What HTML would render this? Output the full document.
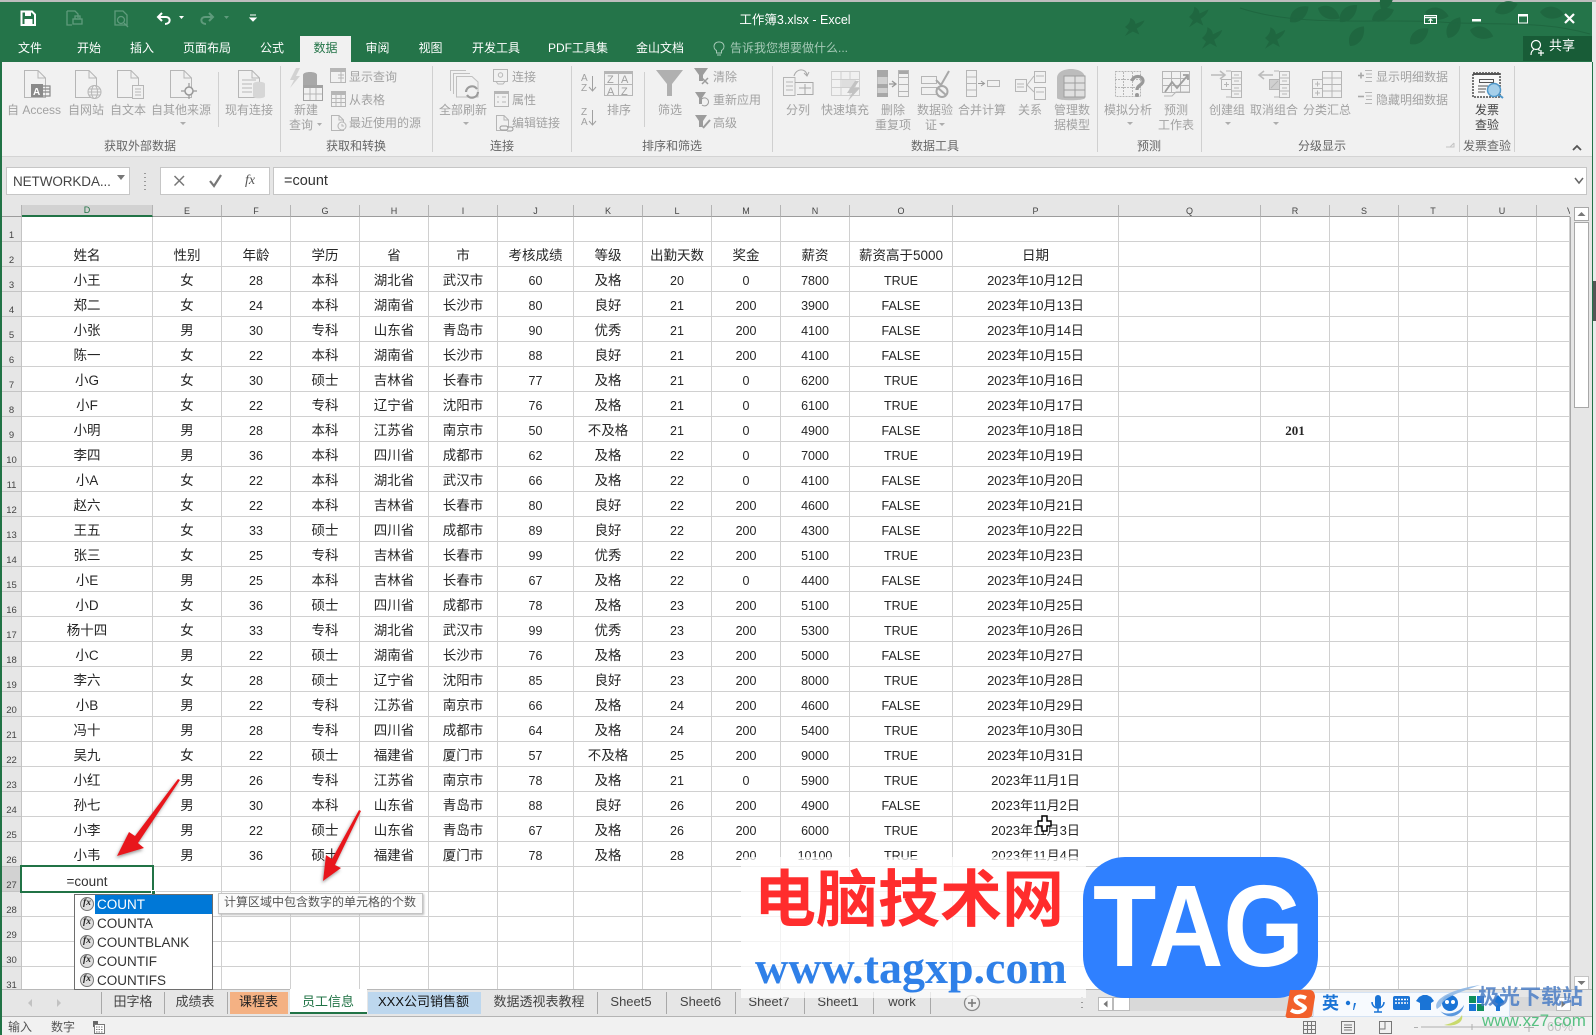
<!DOCTYPE html>
<html lang="zh-CN"><head><meta charset="utf-8"><title>工作簿3.xlsx - Excel</title>
<style>
html,body{margin:0;padding:0;width:1596px;height:1035px;overflow:hidden;background:#e6e6e6;font-family:"Liberation Sans","Noto Sans CJK SC",sans-serif}
*{box-sizing:border-box}
.a{position:absolute}
.t{position:absolute;white-space:nowrap;line-height:14px;font-size:12px;font-style:normal}
.c{transform:translateX(-50%)}
.r{color:#a2a2a2}
.g{color:#666}
.w{color:#fff}
#grid{position:absolute;left:2px;top:205px;width:1568px;height:784px;overflow:hidden}
table{border-collapse:separate;border-spacing:0;table-layout:fixed;width:1568px}
td{height:25px;padding:3px 0 0;border-right:1px solid #d0d0d0;border-bottom:1px solid #d0d0d0;text-align:center;font-size:13.5px;color:#262626;background:#fff;white-space:nowrap;overflow:hidden;line-height:14px}
tr>td:nth-child(4),tr>td:nth-child(8),tr>td:nth-child(10),tr>td:nth-child(11),tr>td:nth-child(12),tr>td:nth-child(13){font-size:12.5px}
tr>td:nth-child(14){font-size:13px}
tbody tr:nth-child(2)>td:nth-child(n){font-size:13.5px}
tbody th{height:25px;background:#e6e6e6;border-bottom:1px solid #c4c4c4;border-right:1px solid #c4c4c4;font-weight:normal;font-size:9.5px;color:#444;vertical-align:bottom;padding:0;line-height:11px}
thead th{height:12px;background:#e6e6e6;border-right:1px solid #b4b4b4;border-bottom:1px solid #9c9c9c;font-weight:normal;font-size:9px;color:#444;padding:0;line-height:10px;overflow:hidden}
.it{position:absolute;left:97px;font-size:13.5px;color:#333;line-height:19px;height:19px;white-space:nowrap}
.fx{position:absolute;left:80px;width:14px;height:14px;border-radius:50%;background:#dedede;border:1.5px solid #777;font:italic bold 9.5px "Liberation Serif",serif;color:#222;text-align:center;line-height:11px}
.tab{position:absolute;top:995px;font-size:13px;line-height:14px;color:#444;white-space:nowrap;transform:translateX(-50%)}
.sep{position:absolute;top:992px;width:1px;height:22px;background:#a8a8a8}
</style></head><body>

<!-- title bar -->
<div class="a" style="left:0;top:0;width:1596px;height:2px;background:#bdbdbd"></div>
<div class="a" style="left:0;top:2px;width:1592px;height:60px;background:#247449"></div>
<div class="a" style="left:1592px;top:2px;width:4px;height:1033px;background:#e9e9e9"></div>
<div class="a" style="left:1593px;top:281px;width:3px;height:40px;background:#555"></div>
<svg class="a" style="left:0;top:0" width="1596" height="62" viewBox="0 0 1596 62">
<defs><path id="lf" d="M0 0C5-9 16-10 24-2C17 6 6 7 0 0Z"/><path id="bd" d="M0 0C2-3 4-5 4-12C7-10 8-7 8-4L15-9C14-4 12-1 9 2L11 10L6 6L0 12L3 4Z"/></defs>
<g fill="#1f6740">
<use href="#bd" transform="translate(1125 27) scale(1.3 .75)"/><use href="#bd" transform="translate(1189 17) scale(1.3 .85)"/><use href="#bd" transform="translate(1202 38) scale(1.35 .9)"/><use href="#bd" transform="translate(1265 38) scale(1.35 .9)"/>
<use href="#lf" transform="translate(1290 22) rotate(-35)"/><use href="#lf" transform="translate(1318 8) rotate(30)"/><use href="#lf" transform="translate(1340 22) rotate(-40)"/>
<use href="#lf" transform="translate(1350 46) rotate(-50)"/><use href="#lf" transform="translate(1372 20) rotate(-20)"/><use href="#lf" transform="translate(1382 10) rotate(-60)"/>
<use href="#lf" transform="translate(1410 44) rotate(-35)"/><use href="#lf" transform="translate(1448 38) rotate(-55)"/><use href="#lf" transform="translate(1425 12) rotate(15)"/>
<use href="#lf" transform="translate(1470 30) rotate(20)"/><use href="#lf" transform="translate(1495 12) rotate(-15)"/><use href="#lf" transform="translate(1540 12) rotate(10)"/>
</g>
<path d="M1240 8C1300 28 1380 18 1440 22S1540 20 1590 34" fill="none" stroke="#1f6740"/>
<!-- QAT -->
<path d="M21.5 11.5H32L35 14.5V25H21.5Z" fill="none" stroke="#fff" stroke-width="2"/><rect x="25" y="12" width="6" height="4" fill="#fff"/><rect x="24.5" y="19" width="8" height="5.5" fill="#fff"/>
<g fill="none" stroke="#5f9b7c" stroke-width="1.3"><path d="M67 11H75L78 14V18M67 11V25H72"/><rect x="73" y="19" width="9" height="5"/><rect x="75" y="16" width="5" height="3"/><path d="M115 11H123L127 15V25H115Z"/><circle cx="121" cy="20" r="3.5"/><path d="M124 23L128 27"/></g>
<path d="M162 13L158 17L162 21M158 17H166C171 17 171 24 165 24" fill="none" stroke="#fff" stroke-width="2"/><path d="M179 16H184L181.5 19Z" fill="#fff"/>
<path d="M209 13L213 17L209 21M213 17H205C200 17 200 24 206 24" fill="none" stroke="#5f9b7c" stroke-width="2"/><path d="M224 16H229L226.5 19Z" fill="#5f9b7c"/>
<path d="M250 15H256M250 18H256L253 21Z" fill="#fff" stroke="#fff" stroke-width="1"/>
<!-- window -->
<g fill="none" stroke="#fff"><rect x="1424.5" y="15.5" width="12" height="8"/><path d="M1424 17.5H1437" stroke-width="1.5"/><path d="M1430.5 23V19M1428.5 21L1430.5 19L1432.5 21"/></g>
<rect x="1472" y="19" width="9" height="2.5" fill="#fff"/>
<rect x="1518.5" y="14.5" width="9" height="8.5" fill="none" stroke="#fff"/><rect x="1518" y="14" width="10" height="2.5" fill="#fff"/>
<path d="M1565 14L1574 23M1574 14L1565 23" stroke="#fff" stroke-width="2.2"/>
<rect x="1523" y="36" width="69" height="25" fill="#185c37"/>
<g fill="none" stroke="#fff" stroke-width="1.2"><circle cx="1536" cy="45" r="4.5"/><path d="M1531 55C1531 51 1533 50 1534 49.5M1538 49.5L1540 50.5M1538 53H1544M1541 50V56"/></g>
</svg>
<div class="t w c" style="left:795px;top:13px;font-size:12.5px">工作簿3.xlsx - Excel</div>
<div class="a" style="left:300px;top:36px;width:51px;height:26px;background:#f1f1f1"></div>
<div class="t w c" style="left:30px;top:41px">文件</div><div class="t w c" style="left:89px;top:41px">开始</div><div class="t w c" style="left:142px;top:41px">插入</div><div class="t w c" style="left:207px;top:41px">页面布局</div><div class="t w c" style="left:272px;top:41px">公式</div><div class="t c" style="left:325.5px;top:41px;color:#217346">数据</div><div class="t w c" style="left:377.5px;top:41px">审阅</div><div class="t w c" style="left:430.5px;top:41px">视图</div><div class="t w c" style="left:496px;top:41px">开发工具</div><div class="t w c" style="left:578px;top:41px">PDF工具集</div><div class="t w c" style="left:660px;top:41px">金山文档</div>
<div class="t" style="left:730px;top:41px;color:#a5c9b6">告诉我您想要做什么...</div>
<svg class="a" style="left:712px;top:41px" width="14" height="16"><path d="M7 1A4.5 4.5 0 0 0 4.5 9.5V12H9.5V9.5A4.5 4.5 0 0 0 7 1ZM5 14H9" fill="none" stroke="#a5c9b6"/></svg>
<div class="t w" style="left:1549px;top:39px;font-size:13px">共享</div>

<!-- ribbon -->
<div class="a" style="left:0;top:62px;width:1592px;height:94px;background:#f1f1f1"></div>
<div class="a" style="left:0;top:156px;width:1592px;height:1px;background:#d4d4d4"></div>
<svg class="a" style="left:0;top:60px" width="1596" height="100" viewBox="0 60 1596 100">
<defs><path id="d" d="M.5.5H14L21.5 8V27.5H.5ZM14 .5V8H21.5"/><path id="ds" d="M.5.5H8L12.5 5V15.5H.5ZM8 .5V5H12.5"/></defs>
<g stroke="#d0d0d0"><path d="M280.5 66V152M432.5 66V152M571.5 66V152M772.5 66V152M1097.5 66V152M1201.5 66V152M1459.5 66V152M1514.5 66V152"/><path d="M218.5 72V127M644.5 72V127"/></g>
<g fill="none" stroke="#b6b6b6">
<use href="#d" x="24" y="70"/><rect x="31" y="84" width="12" height="13" fill="#8a8a8a" stroke="none"/><path d="M43 86H50V96H43M43 89H50M43 92H50" stroke="#8a8a8a" stroke-width="1.2"/>
<use href="#d" x="75" y="70"/><circle cx="94.5" cy="92" r="6.5" fill="#f1f1f1"/><ellipse cx="94.5" cy="92" rx="3" ry="6.5"/><path d="M88 92H101M89 89H100M89 95H100"/>
<use href="#d" x="117" y="70"/><rect x="132.5" y="85.5" width="11" height="13" fill="#f1f1f1"/><path d="M135 89H141M135 92H141M135 95H141"/>
<use href="#d" x="170" y="70"/><circle cx="189" cy="91" r="4" fill="#f1f1f1" stroke="#999" stroke-width="1.5"/><path d="M181 91H185M193 91H197M189 83V87M189 95V99" stroke="#999" stroke-width="1.2"/>
<use href="#d" x="238" y="70"/><path d="M242 80H256M242 84H252M242 88H252M242 92H252"/><path d="M253 84C253 81 265 81 265 84V96C265 99 253 99 253 96Z" fill="#d6d6d6" stroke="none"/>
<path d="M296 68L290 80H294L290 88L300 76H296L300 68Z" fill="#d2d2d2" stroke="none"/><path d="M303 75C303 71 317 71 317 75V90H303Z" fill="#a8a8a8" stroke="none"/><rect x="303.5" y="85.5" width="19" height="15" fill="#f1f1f1" stroke="#a2a2a2"/><rect x="303" y="85" width="20" height="3" fill="#a2a2a2" stroke="none"/><path d="M310 88V100M316 88V100M304 94H322"/>
<rect x="330.5" y="68.5" width="15" height="14"/><rect x="331" y="69" width="14" height="3" fill="#b6b6b6" stroke="none"/><path d="M338 75H344M338 78H344M341 72V82"/>
<rect x="331.5" y="91.5" width="14" height="15"/><path d="M331 94.5H346M331 98.5H346M331 102.5H346M336 92V106M341 92V106"/><rect x="331" y="91" width="15" height="3" fill="#b6b6b6" stroke="none"/>
<use href="#ds" x="331" y="115"/><circle cx="342" cy="126" r="4" fill="#f1f1f1"/><path d="M342 124V126H344"/>
<g stroke="#c0c0c0"><path d="M450.5 91V70.5H466M453.5 94V73.5H470M456.5 97V76.5H472L478 82V97H456.5Z"/></g><path d="M466 92A6 6 0 0 1 477 89M478 92A6 6 0 0 1 467 95" stroke="#9c9c9c" stroke-width="2.2"/>
<rect x="493.5" y="69.5" width="14" height="12"/><circle cx="500.5" cy="75" r="2.2"/><path d="M496 81.5L498 84H503L505 81.5"/>
<rect x="494.5" y="91.5" width="14" height="15"/><rect x="494" y="91" width="15" height="3" fill="#b6b6b6" stroke="none"/><path d="M497 97H499M502 97H506M497 102H499M502 102H506"/>
<use href="#ds" x="496" y="115"/><path d="M502 126H506A2 2 0 0 1 506 130H502A2 2 0 0 1 502 126ZM507 127H511A2 2 0 0 1 511 131H507" fill="#f1f1f1" stroke="#999"/>
<path d="M592.5 76V91M589 87L592.5 91L596 87M592.5 110V125M589 121L592.5 125L596 121" stroke="#a0a0a0"/>
<rect x="604.5" y="71.5" width="28" height="24"/><rect x="604" y="71" width="29" height="3" fill="#b6b6b6" stroke="none"/><path d="M618.5 74V96M604 84.5H632"/>
<path d="M656 70H683L672 84V96H667V84Z" fill="#b0b0b0" stroke="none"/>
<path d="M694 68H708L703 75V81H699V75Z" fill="#9c9c9c" stroke="none"/><path d="M702 78L708 84M708 78L702 84" stroke="#9c9c9c" stroke-width="1.5"/>
<path d="M695 92H706L702 98V104H699V98Z" fill="#9c9c9c" stroke="none"/><path d="M702 105A4 4 0 1 0 701 100" stroke="#9c9c9c"/>
<path d="M695 115H707L703 121V127H699V121Z" fill="#9c9c9c" stroke="none"/><path d="M703 128L710 120" stroke="#9c9c9c" stroke-width="2"/>
<path d="M783.5 77.5H795V95.5H783.5ZM786 82H793M786 86H793M786 90H793"/><path d="M795 82.5H813V94.5H797M799 88H811M805 84V94M794 76C796 68 806 68 807 75M804 73L807 76L809 72" stroke="#a8a8a8"/>
<rect x="831.5" y="71.5" width="28" height="24" stroke="#cfcfcf"/><path d="M831 79.5H860M831 87.5H860M841 72V95M850 72V95" stroke="#cfcfcf"/><rect x="842" y="80" width="14" height="7" fill="#dedede" stroke="none"/><path d="M855 81L847 93H852L848 101L860 88H854L859 81Z" fill="#c2c2c2" stroke="none"/>
<rect x="877" y="70" width="11" height="27" fill="#a8a8a8" stroke="none"/><rect x="877.5" y="77" width="10" height="7" fill="#d0d0d0" stroke="none"/><rect x="877.5" y="88" width="10" height="5" fill="#d0d0d0" stroke="none"/><path d="M889 84H895M892 81L896 84L892 87" stroke="#999" stroke-width="1.3"/><rect x="898" y="70" width="10" height="4" fill="#a8a8a8" stroke="none"/><rect x="898.5" y="70.5" width="10" height="26"/><path d="M898 77.5H908M898 84.5H908M898 91.5H908"/>
<rect x="921.5" y="76.5" width="15" height="7"/><rect x="921.5" y="87.5" width="15" height="7"/><path d="M936 80L941 85L949 71" stroke="#a8a8a8" stroke-width="2"/><circle cx="942" cy="91.5" r="5.5" stroke="#a8a8a8" stroke-width="2"/><path d="M938 88L946 95" stroke="#a8a8a8" stroke-width="2"/>
<path d="M966.5 70.5H976.5V96.5H966.5ZM966 77H977M966 83.5H977M966 90H977"/><path d="M978 83.5H984M981 81L984.5 83.5L981 86" stroke="#999"/><rect x="987.5" y="80.5" width="12" height="6"/>
<rect x="1015.5" y="79.5" width="11" height="12"/><rect x="1034.5" y="71.5" width="11" height="11"/><rect x="1034.5" y="87.5" width="11" height="12"/><path d="M1017 84H1024M1017 87H1024M1027 85L1034 76M1027 85L1034 92M1036 76H1044M1036 92H1044"/>
<path d="M1057 78C1057 66 1085 66 1085 78V98C1085 101 1057 101 1057 98Z" fill="#bcbcbc" stroke="none"/><rect x="1064" y="76" width="21" height="21" fill="#e0e0e0" stroke="#9e9e9e"/><path d="M1075 76V97M1064 83H1085M1064 90H1085" stroke="#9e9e9e"/>
<rect x="1115.5" y="71.5" width="25" height="25" stroke-dasharray="2 1"/><path d="M1115 79.5H1141M1115 87.5H1141M1123.5 72V96M1132.5 72V96" stroke-dasharray="2 1"/><path d="M1132 81C1133 75 1143 75 1143 81C1143 85 1137 85 1137 90" stroke="#999" stroke-width="3.2"/><circle cx="1137" cy="95" r="2" fill="#999" stroke="none"/>
<rect x="1162.5" y="71.5" width="27" height="21"/><path d="M1162 78.5H1190M1162 85.5H1190M1171.5 72V92M1180.5 72V92"/><path d="M1165 92L1172 82L1177 88L1188 75M1183 75H1188V80" stroke="#9f9f9f" stroke-width="1.8"/><path d="M1164 96H1172L1176 92H1190"/>
<path d="M1211 75H1225M1220 71L1225 75L1220 79" stroke="#bbb" stroke-width="1.6"/><path d="M1231.5 71.5H1241.5V97.5H1231.5ZM1231 78H1242M1231 84.5H1242M1231 91H1242M1234 75H1239M1234 81H1239M1234 88H1239M1234 94H1239M1231 71H1226M1231 97H1226"/><rect x="1221.5" y="79.5" width="10" height="10" fill="#f1f1f1"/><path d="M1224 84.5H1229M1226.5 82V87"/>
<path d="M1273 75H1259M1264 71L1259 75L1264 79" stroke="#bbb" stroke-width="1.6"/><path d="M1279.5 71.5H1289.5V97.5H1279.5ZM1279 78H1290M1279 84.5H1290M1279 91H1290M1282 75H1287M1282 81H1287M1282 88H1287M1282 94H1287M1279 71H1274M1279 97H1274"/><rect x="1269.5" y="79.5" width="10" height="10" fill="#d0d0d0"/><path d="M1271 88L1278 81"/>
<path d="M1322.5 71.5H1341.5V97.5H1322.5ZM1322 78H1342M1322 84.5H1342M1322 91H1342M1332 72V97"/><rect x="1312.5" y="79.5" width="10" height="9" fill="#f1f1f1"/><path d="M1315 84H1320M1317.5 81.5V86.5"/><rect x="1312.5" y="88.5" width="10" height="9" fill="#f1f1f1"/><path d="M1315 93H1320M1317.5 90.5V95.5"/>
<path d="M1358 75.5H1364M1361 72.5V78.5" stroke="#a8a8a8" stroke-width="1.6"/><path d="M1365 70.5H1372M1366 74H1372M1366 77.5H1372M1365 81.5H1372"/>
<path d="M1358 96.5H1364" stroke="#a8a8a8" stroke-width="1.6"/><path d="M1365 92.5H1372M1366 96H1372M1366 99.5H1372M1365 103.5H1372"/>
<rect x="1473" y="73" width="27" height="24" stroke="#4a4a4a" stroke-width="1.5" stroke-dasharray="2 1" fill="#f8f8f8"/><rect x="1473" y="73" width="27" height="2" fill="#555" stroke="none"/><rect x="1479.5" y="79.5" width="14" height="3" stroke="#555"/><path d="M1478 86H1488M1478 89H1486M1478 92H1485" stroke="#555"/>
<circle cx="1494" cy="90" r="6.5" fill="#a5cfea" stroke="#4f97c9" stroke-width="1.5"/><path d="M1498.5 94.5L1503 98" stroke="#4f97c9" stroke-width="2"/>
<path d="M1446 147H1454V143M1450 147L1454 143" stroke="#c4c4c4"/>
<path d="M1573 150L1577 146L1581 150" stroke="#555" stroke-width="1.8"/>
</g>
<g fill="#adadad"><path d="M180 122H186L183 125ZM317 123H322L319.5 126ZM463 122H469L466 125ZM939 123H945L942 126ZM1127 122H1133L1130 125ZM1225 122H1231L1228 125ZM1273 122H1279L1276 125Z"/></g>
<g fill="#a0a0a0" font-size="10" font-family="Liberation Sans,sans-serif"><text x="581" y="81">A</text><text x="581" y="91">Z</text><text x="581" y="115">Z</text><text x="581" y="125">A</text><text x="607" y="83" font-size="11">Z</text><text x="621" y="83" font-size="11">A</text><text x="607" y="95" font-size="11">A</text><text x="621" y="95" font-size="11">Z</text></g>
<text x="33" y="95" fill="#fff" font-size="10" font-weight="bold" font-family="Liberation Sans,sans-serif">A</text>
</svg>
<div class="t r c" style="left:34px;top:103px">自 Access</div><div class="t r c" style="left:86px;top:103px">自网站</div><div class="t r c" style="left:128px;top:103px">自文本</div><div class="t r c" style="left:181px;top:103px">自其他来源</div><div class="t r c" style="left:249px;top:103px">现有连接</div>
<div class="t r c" style="left:306px;top:103px">新建</div><div class="t r c" style="left:301px;top:118px">查询</div>
<div class="t r" style="left:349px;top:70px">显示查询</div><div class="t r" style="left:349px;top:93px">从表格</div><div class="t r" style="left:349px;top:116px">最近使用的源</div>
<div class="t r c" style="left:463px;top:103px">全部刷新</div><div class="t r" style="left:512px;top:70px">连接</div><div class="t r" style="left:512px;top:93px">属性</div><div class="t r" style="left:512px;top:116px">编辑链接</div>
<div class="t r c" style="left:619px;top:103px">排序</div><div class="t r c" style="left:670px;top:103px">筛选</div><div class="t r" style="left:713px;top:70px">清除</div><div class="t r" style="left:713px;top:93px">重新应用</div><div class="t r" style="left:713px;top:116px">高级</div>
<div class="t r c" style="left:798px;top:103px">分列</div><div class="t r c" style="left:845px;top:103px">快速填充</div><div class="t r c" style="left:893px;top:103px">删除</div><div class="t r c" style="left:893px;top:118px">重复项</div><div class="t r c" style="left:935px;top:103px">数据验</div><div class="t r c" style="left:931px;top:118px">证</div><div class="t r c" style="left:982px;top:103px">合并计算</div><div class="t r c" style="left:1030px;top:103px">关系</div><div class="t r c" style="left:1072px;top:103px">管理数</div><div class="t r c" style="left:1072px;top:118px">据模型</div>
<div class="t r c" style="left:1128px;top:103px">模拟分析</div><div class="t r c" style="left:1176px;top:103px">预测</div><div class="t r c" style="left:1176px;top:118px">工作表</div>
<div class="t r c" style="left:1227px;top:103px">创建组</div><div class="t r c" style="left:1274px;top:103px">取消组合</div><div class="t r c" style="left:1327px;top:103px">分类汇总</div><div class="t r" style="left:1376px;top:70px">显示明细数据</div><div class="t r" style="left:1376px;top:93px">隐藏明细数据</div>
<div class="t c" style="left:1487px;top:103px;color:#444">发票</div><div class="t c" style="left:1487px;top:118px;color:#444">查验</div>
<div class="t g c" style="left:140px;top:139px">获取外部数据</div><div class="t g c" style="left:356px;top:139px">获取和转换</div><div class="t g c" style="left:502px;top:139px">连接</div><div class="t g c" style="left:672px;top:139px">排序和筛选</div><div class="t g c" style="left:935px;top:139px">数据工具</div><div class="t g c" style="left:1149px;top:139px">预测</div><div class="t g c" style="left:1322px;top:139px">分级显示</div><div class="t g c" style="left:1487px;top:139px">发票查验</div>

<!-- formula bar -->
<div class="a" style="left:6px;top:167px;width:124px;height:28px;background:#fff;border:1px solid #c6c6c6"></div>
<div class="t" style="left:13px;top:175px;font-size:13.5px;color:#444;letter-spacing:-.1px">NETWORKDA...</div>
<svg class="a" style="left:0;top:160px" width="300" height="40"><path d="M117 15H125L121 20Z" fill="#777"/><path d="M145 13V14M145 17V18M145 21V22M145 25V26M145 29V30" stroke="#999" stroke-width="2"/></svg>
<div class="a" style="left:160px;top:167px;width:110px;height:28px;background:#fff;border:1px solid #c6c6c6"></div>
<svg class="a" style="left:160px;top:167px" width="110" height="28"><path d="M14.5 9L24 18.5M24 9L14.5 18.5" stroke="#777" stroke-width="1.5"/><path d="M50 14L54 19L61 8" fill="none" stroke="#777" stroke-width="2.2"/></svg>
<div class="t" style="left:245px;top:174px;font:italic 14px 'Liberation Serif',serif;color:#555;line-height:14px">fx</div>
<div class="a" style="left:273px;top:167px;width:1314px;height:28px;background:#fff;border:1px solid #c6c6c6"></div>
<div class="t" style="left:284px;top:174px;font-size:14.5px;color:#333">=count</div>
<svg class="a" style="left:1572px;top:174px" width="14" height="14"><path d="M3 4L7 9L11 4" fill="none" stroke="#666" stroke-width="1.5"/></svg>

<!-- left green edge -->
<div class="a" style="left:0;top:62px;width:2px;height:973px;background:#217346;z-index:9"></div>
<div class="a" style="left:1592px;top:62px;width:1px;height:973px;background:#217346;z-index:9"></div>

<!-- grid -->
<div id="grid"><table>
<colgroup><col style="width:20px"><col style="width:131px"><col style="width:69px"><col style="width:69px"><col style="width:69px"><col style="width:69px"><col style="width:69px"><col style="width:76px"><col style="width:69px"><col style="width:69px"><col style="width:69px"><col style="width:69px"><col style="width:103px"><col style="width:166px"><col style="width:142px"><col style="width:69px"><col style="width:69px"><col style="width:69px"><col style="width:69px"><col style="width:33px"></colgroup>
<thead><tr><th></th><th style="background:#d2d2d2;color:#217346;border-bottom:2px solid #217346">D</th><th>E</th><th>F</th><th>G</th><th>H</th><th>I</th><th>J</th><th>K</th><th>L</th><th>M</th><th>N</th><th>O</th><th>P</th><th>Q</th><th>R</th><th>S</th><th>T</th><th>U</th><th style="text-align:right;border-right:0"><span style="position:relative;left:3px">V</span></th></tr></thead>
<tbody>
<tr><th>1</th><td></td><td></td><td></td><td></td><td></td><td></td><td></td><td></td><td></td><td></td><td></td><td></td><td></td><td></td><td></td><td></td><td></td><td></td><td></td></tr>
<tr><th>2</th><td>姓名</td><td>性别</td><td>年龄</td><td>学历</td><td>省</td><td>市</td><td>考核成绩</td><td>等级</td><td>出勤天数</td><td>奖金</td><td>薪资</td><td>薪资高于5000</td><td>日期</td><td></td><td></td><td></td><td></td><td></td><td></td></tr>
<tr><th>3</th><td>小王</td><td>女</td><td>28</td><td>本科</td><td>湖北省</td><td>武汉市</td><td>60</td><td>及格</td><td>20</td><td>0</td><td>7800</td><td>TRUE</td><td>2023年10月12日</td><td></td><td></td><td></td><td></td><td></td><td></td></tr>
<tr><th>4</th><td>郑二</td><td>女</td><td>24</td><td>本科</td><td>湖南省</td><td>长沙市</td><td>80</td><td>良好</td><td>21</td><td>200</td><td>3900</td><td>FALSE</td><td>2023年10月13日</td><td></td><td></td><td></td><td></td><td></td><td></td></tr>
<tr><th>5</th><td>小张</td><td>男</td><td>30</td><td>专科</td><td>山东省</td><td>青岛市</td><td>90</td><td>优秀</td><td>21</td><td>200</td><td>4100</td><td>FALSE</td><td>2023年10月14日</td><td></td><td></td><td></td><td></td><td></td><td></td></tr>
<tr><th>6</th><td>陈一</td><td>女</td><td>22</td><td>本科</td><td>湖南省</td><td>长沙市</td><td>88</td><td>良好</td><td>21</td><td>200</td><td>4100</td><td>FALSE</td><td>2023年10月15日</td><td></td><td></td><td></td><td></td><td></td><td></td></tr>
<tr><th>7</th><td>小G</td><td>女</td><td>30</td><td>硕士</td><td>吉林省</td><td>长春市</td><td>77</td><td>及格</td><td>21</td><td>0</td><td>6200</td><td>TRUE</td><td>2023年10月16日</td><td></td><td></td><td></td><td></td><td></td><td></td></tr>
<tr><th>8</th><td>小F</td><td>女</td><td>22</td><td>专科</td><td>辽宁省</td><td>沈阳市</td><td>76</td><td>及格</td><td>21</td><td>0</td><td>6100</td><td>TRUE</td><td>2023年10月17日</td><td></td><td></td><td></td><td></td><td></td><td></td></tr>
<tr><th>9</th><td>小明</td><td>男</td><td>28</td><td>本科</td><td>江苏省</td><td>南京市</td><td>50</td><td>不及格</td><td>21</td><td>0</td><td>4900</td><td>FALSE</td><td>2023年10月18日</td><td></td><td style="font:bold 13px 'Liberation Serif',serif">201</td><td></td><td></td><td></td><td></td></tr>
<tr><th>10</th><td>李四</td><td>男</td><td>36</td><td>本科</td><td>四川省</td><td>成都市</td><td>62</td><td>及格</td><td>22</td><td>0</td><td>7000</td><td>TRUE</td><td>2023年10月19日</td><td></td><td></td><td></td><td></td><td></td><td></td></tr>
<tr><th>11</th><td>小A</td><td>女</td><td>22</td><td>本科</td><td>湖北省</td><td>武汉市</td><td>66</td><td>及格</td><td>22</td><td>0</td><td>4100</td><td>FALSE</td><td>2023年10月20日</td><td></td><td></td><td></td><td></td><td></td><td></td></tr>
<tr><th>12</th><td>赵六</td><td>女</td><td>22</td><td>本科</td><td>吉林省</td><td>长春市</td><td>80</td><td>良好</td><td>22</td><td>200</td><td>4600</td><td>FALSE</td><td>2023年10月21日</td><td></td><td></td><td></td><td></td><td></td><td></td></tr>
<tr><th>13</th><td>王五</td><td>女</td><td>33</td><td>硕士</td><td>四川省</td><td>成都市</td><td>89</td><td>良好</td><td>22</td><td>200</td><td>4300</td><td>FALSE</td><td>2023年10月22日</td><td></td><td></td><td></td><td></td><td></td><td></td></tr>
<tr><th>14</th><td>张三</td><td>女</td><td>25</td><td>专科</td><td>吉林省</td><td>长春市</td><td>99</td><td>优秀</td><td>22</td><td>200</td><td>5100</td><td>TRUE</td><td>2023年10月23日</td><td></td><td></td><td></td><td></td><td></td><td></td></tr>
<tr><th>15</th><td>小E</td><td>男</td><td>25</td><td>本科</td><td>吉林省</td><td>长春市</td><td>67</td><td>及格</td><td>22</td><td>0</td><td>4400</td><td>FALSE</td><td>2023年10月24日</td><td></td><td></td><td></td><td></td><td></td><td></td></tr>
<tr><th>16</th><td>小D</td><td>女</td><td>36</td><td>硕士</td><td>四川省</td><td>成都市</td><td>78</td><td>及格</td><td>23</td><td>200</td><td>5100</td><td>TRUE</td><td>2023年10月25日</td><td></td><td></td><td></td><td></td><td></td><td></td></tr>
<tr><th>17</th><td>杨十四</td><td>女</td><td>33</td><td>专科</td><td>湖北省</td><td>武汉市</td><td>99</td><td>优秀</td><td>23</td><td>200</td><td>5300</td><td>TRUE</td><td>2023年10月26日</td><td></td><td></td><td></td><td></td><td></td><td></td></tr>
<tr><th>18</th><td>小C</td><td>男</td><td>22</td><td>硕士</td><td>湖南省</td><td>长沙市</td><td>76</td><td>及格</td><td>23</td><td>200</td><td>5000</td><td>FALSE</td><td>2023年10月27日</td><td></td><td></td><td></td><td></td><td></td><td></td></tr>
<tr><th>19</th><td>李六</td><td>女</td><td>28</td><td>硕士</td><td>辽宁省</td><td>沈阳市</td><td>85</td><td>良好</td><td>23</td><td>200</td><td>8000</td><td>TRUE</td><td>2023年10月28日</td><td></td><td></td><td></td><td></td><td></td><td></td></tr>
<tr><th>20</th><td>小B</td><td>男</td><td>22</td><td>专科</td><td>江苏省</td><td>南京市</td><td>66</td><td>及格</td><td>24</td><td>200</td><td>4600</td><td>FALSE</td><td>2023年10月29日</td><td></td><td></td><td></td><td></td><td></td><td></td></tr>
<tr><th>21</th><td>冯十</td><td>男</td><td>28</td><td>专科</td><td>四川省</td><td>成都市</td><td>64</td><td>及格</td><td>24</td><td>200</td><td>5400</td><td>TRUE</td><td>2023年10月30日</td><td></td><td></td><td></td><td></td><td></td><td></td></tr>
<tr><th>22</th><td>吴九</td><td>女</td><td>22</td><td>硕士</td><td>福建省</td><td>厦门市</td><td>57</td><td>不及格</td><td>25</td><td>200</td><td>9000</td><td>TRUE</td><td>2023年10月31日</td><td></td><td></td><td></td><td></td><td></td><td></td></tr>
<tr><th>23</th><td>小红</td><td>男</td><td>26</td><td>专科</td><td>江苏省</td><td>南京市</td><td>78</td><td>及格</td><td>21</td><td>0</td><td>5900</td><td>TRUE</td><td>2023年11月1日</td><td></td><td></td><td></td><td></td><td></td><td></td></tr>
<tr><th>24</th><td>孙七</td><td>男</td><td>30</td><td>本科</td><td>山东省</td><td>青岛市</td><td>88</td><td>良好</td><td>26</td><td>200</td><td>4900</td><td>FALSE</td><td>2023年11月2日</td><td></td><td></td><td></td><td></td><td></td><td></td></tr>
<tr><th>25</th><td>小李</td><td>男</td><td>22</td><td>硕士</td><td>山东省</td><td>青岛市</td><td>67</td><td>及格</td><td>26</td><td>200</td><td>6000</td><td>TRUE</td><td>2023年11月3日</td><td></td><td></td><td></td><td></td><td></td><td></td></tr>
<tr><th>26</th><td>小韦</td><td>男</td><td>36</td><td>硕士</td><td>福建省</td><td>厦门市</td><td>78</td><td>及格</td><td>28</td><td>200</td><td>10100</td><td>TRUE</td><td>2023年11月4日</td><td></td><td></td><td></td><td></td><td></td><td></td></tr>
<tr><th style="background:#d2d2d2">27</th><td></td><td></td><td></td><td></td><td></td><td></td><td></td><td></td><td></td><td></td><td></td><td></td><td></td><td></td><td></td><td></td><td></td><td></td><td></td></tr>
<tr><th>28</th><td></td><td></td><td></td><td></td><td></td><td></td><td></td><td></td><td></td><td></td><td></td><td></td><td></td><td></td><td></td><td></td><td></td><td></td><td></td></tr>
<tr><th>29</th><td></td><td></td><td></td><td></td><td></td><td></td><td></td><td></td><td></td><td></td><td></td><td></td><td></td><td></td><td></td><td></td><td></td><td></td><td></td></tr>
<tr><th>30</th><td></td><td></td><td></td><td></td><td></td><td></td><td></td><td></td><td></td><td></td><td></td><td></td><td></td><td></td><td></td><td></td><td></td><td></td><td></td></tr>
<tr><th>31</th><td></td><td></td><td></td><td></td><td></td><td></td><td></td><td></td><td></td><td></td><td></td><td></td><td></td><td></td><td></td><td></td><td></td><td></td><td></td></tr>
</tbody></table></div>
<div class="a" style="left:1570px;top:217px;width:1px;height:772px;background:#a8a8a8"></div>

<!-- selected cell -->
<div class="a" style="left:20px;top:865px;width:134px;height:28px;border:2px solid #217346;background:#fff"></div>
<div class="a" style="left:151px;top:890px;width:5px;height:5px;background:#217346;border:1px solid #fff"></div>
<div class="t c" style="left:87px;top:875px;font-size:13.5px;color:#333">=count</div>

<!-- autocomplete -->
<div class="a" style="left:74px;top:894px;width:139px;height:96px;background:#fff;border:1px solid #6e6e6e;z-index:2"></div>
<div class="a" style="left:95px;top:895px;width:117px;height:19px;background:#0078d7;z-index:2"></div>
<div style="position:absolute;z-index:3;left:0;top:0">
<div class="fx" style="top:897px">fx</div><div class="it" style="top:895px;color:#fff">COUNT</div>
<div class="fx" style="top:916px">fx</div><div class="it" style="top:914px">COUNTA</div>
<div class="fx" style="top:935px">fx</div><div class="it" style="top:933px">COUNTBLANK</div>
<div class="fx" style="top:954px">fx</div><div class="it" style="top:952px">COUNTIF</div>
<div class="fx" style="top:973px">fx</div><div class="it" style="top:971px">COUNTIFS</div>
</div>
<div class="a" style="left:218px;top:893px;width:205px;height:21px;background:#fbfbfb;border:1px solid #c4c4c4;box-shadow:1px 1px 2px #bbb;z-index:2"></div>
<div class="t" style="left:224px;top:895px;color:#555;z-index:3">计算区域中包含数字的单元格的个数</div>

<!-- v-scroll -->
<div class="a" style="left:1571px;top:205px;width:21px;height:784px;background:#e6e6e6"></div>
<div class="a" style="left:1574px;top:207px;width:15px;height:14px;background:#fff;border:1px solid #a8a8a8"></div>
<svg class="a" style="left:1574px;top:207px" width="15" height="14"><path d="M3.5 9H11.5L7.5 5Z" fill="#777"/></svg>
<div class="a" style="left:1574px;top:222px;width:15px;height:186px;background:#fff;border:1px solid #a8a8a8"></div>
<div class="a" style="left:1574px;top:976px;width:15px;height:14px;background:#fff;border:1px solid #c4c4c4"></div>
<svg class="a" style="left:1574px;top:976px" width="15" height="14"><path d="M3.5 5H11.5L7.5 9Z" fill="#777"/></svg>

<!-- sheet tabs -->
<div class="a" style="left:2px;top:989px;width:1590px;height:28px;background:#e6e6e6;border-top:1px solid #b8b8b8;border-bottom:1px solid #b4b4b4"></div>
<svg class="a" style="left:20px;top:994px" width="50" height="18"><path d="M12 5L8 9L12 13Z" fill="#c2c2c2"/><path d="M37 5L41 9L37 13Z" fill="#c2c2c2"/></svg>
<div class="a" style="left:230px;top:992px;width:58px;height:22px;background:#f4b183"></div>
<div class="a" style="left:290px;top:989px;width:77px;height:25px;background:#fff;border-bottom:2px solid #217346"></div>
<div class="a" style="left:368px;top:992px;width:113px;height:22px;background:#bdd7ee"></div>
<div class="sep" style="left:101px"></div><div class="sep" style="left:164px"></div><div class="sep" style="left:227px"></div><div class="sep" style="left:597px"></div><div class="sep" style="left:666px"></div><div class="sep" style="left:735px"></div><div class="sep" style="left:804px"></div><div class="sep" style="left:873px"></div><div class="sep" style="left:930px"></div>
<div class="tab" style="left:133px">田字格</div><div class="tab" style="left:195px">成绩表</div><div class="tab" style="left:258.5px;color:#222">课程表</div><div class="tab" style="left:328px;color:#217346">员工信息</div><div class="tab" style="left:423.5px;color:#111">XXX公司销售额</div><div class="tab" style="left:539px">数据透视表教程</div><div class="tab" style="left:631px">Sheet5</div><div class="tab" style="left:700.5px">Sheet6</div><div class="tab" style="left:769px">Sheet7</div><div class="tab" style="left:838px">Sheet1</div><div class="tab" style="left:902px">work</div>
<svg class="a" style="left:960px;top:994px" width="130" height="18"><circle cx="12" cy="9" r="7.5" fill="#eee" stroke="#8a8a8a" stroke-width="1.3"/><path d="M8 9H16M12 5V13" stroke="#777" stroke-width="1.5"/><path d="M122 3V4M122 8V9M122 13V14" stroke="#999" stroke-width="2"/></svg>
<div class="a" style="left:1099px;top:997px;width:461px;height:14px;background:#d9d9d9"></div>
<div class="a" style="left:1098px;top:997px;width:15px;height:14px;background:#fff;border:1px solid #bbb"></div>
<svg class="a" style="left:1098px;top:997px" width="15" height="14"><path d="M9.5 3.5V10.5L5.5 7Z" fill="#777"/></svg>
<div class="a" style="left:1113px;top:997px;width:17px;height:14px;background:#fff;border:1px solid #bbb"></div>
<div class="a" style="left:1556px;top:997px;width:15px;height:14px;background:#fff;border:1px solid #bbb"></div>
<svg class="a" style="left:1556px;top:997px" width="15" height="14"><path d="M5.5 3.5V10.5L9.5 7Z" fill="#777"/></svg>

<!-- status bar -->
<div class="a" style="left:2px;top:1017px;width:1590px;height:18px;background:#f1f1f1"></div>
<div class="t" style="left:8px;top:1020px;color:#555">输入</div><div class="t" style="left:51px;top:1020px;color:#555">数字</div>
<svg class="a" style="left:90px;top:1018px" width="18" height="17"><rect x="3" y="3" width="5" height="6" fill="#666"/><rect x="4.5" y="6.5" width="10" height="9" fill="#fff" stroke="#777"/><path d="M6 9H13M6 11.5H13M6 14H13" stroke="#777" stroke-dasharray="1.5 1"/></svg>
<svg class="a" style="left:1296px;top:1017px" width="296" height="18" fill="none" stroke="#777"><rect x="7.5" y="4.5" width="12" height="12"/><path d="M11.5 4V17M15.5 4V17M7 8.5H20M7 12.5H20"/><rect x="45.5" y="4.5" width="13" height="12"/><path d="M48 8H56M48 10.5H56M48 13H56"/><rect x="83.5" y="4.5" width="12" height="12"/><path d="M84 12H89V4"/><path d="M118 10.5H122M125 10H223M176 7V13M233 6V15M228 10.5H238" stroke="#b0b0b0"/></svg>
<div class="t" style="left:1547px;top:1020px;font-size:13px;color:#c4c4c4">60%</div>

<!-- cursor -->
<svg class="a" style="left:1037px;top:815px;z-index:5" width="16" height="18"><path d="M5 1H10V6H14V11H10V16H5V11H1V6H5Z" fill="#fff" stroke="#000" stroke-width="1.5"/></svg>

<!-- arrows -->
<svg class="a" style="left:100px;top:770px;z-index:5" width="280" height="125">
<defs><filter id="sh" x="-20%" y="-20%" width="140%" height="140%"><feDropShadow dx="-1" dy="2" stdDeviation="1.5" flood-color="#555" flood-opacity=".6"/></filter></defs>
<g fill="#e8141c" filter="url(#sh)"><path d="M78 9L80 10L38 73L44 78L17 86L29 62L35 66Z"/><path d="M259 40L261 41L235 95L241 98L223 111L226 85L232 89Z"/></g></svg>

<!-- watermark -->
<div class="a" style="left:741px;top:857px;width:345px;height:141px;background:rgba(255,255,255,.72);z-index:4"></div>
<div class="a" style="left:754px;top:861px;z-index:5;font:bold 62px/66px 'Noto Sans CJK SC',sans-serif;color:#ff2d2d;white-space:nowrap">电脑技术网</div>
<div class="a" style="left:755px;top:941px;z-index:5;font:bold 46px/54px 'Liberation Serif',serif;color:#2f80e8;white-space:nowrap">www.tagxp.com</div>
<svg class="a" style="left:1083px;top:857px;z-index:5" width="235" height="141"><rect width="235" height="141" rx="42" fill="#2f80ff"/><text x="10" y="109" font-family="Liberation Sans,sans-serif" font-weight="bold" font-size="116" fill="#fff" textLength="211" lengthAdjust="spacingAndGlyphs">TAG</text></svg>

<!-- sogou -->
<div class="a" style="left:1313px;top:992px;width:197px;height:25px;background:#f7fafe;border:1px solid #d5e3f4;z-index:6"></div>
<svg class="a" style="left:1284px;top:985px;z-index:7" width="312" height="50">
<path d="M6 5H26C29 5 31 8 31 12L28 30C27 33 24 33 21 33H4C2 33 1 31 2 29Z" fill="#f2602b"/><path d="M22 13C14 9 8 14 14 18S24 22 18 26C14 28 10 27 7 25" fill="none" stroke="#fff" stroke-width="4"/>
<g fill="#1a74d6"><circle cx="64" cy="18" r="2.2"/><path d="M70 18H72L70 25H69Z"/><rect x="91" y="10" width="6" height="13" rx="3"/><path d="M88 17A6 6 0 0 0 100 17M94 23V27M90 27H98" fill="none" stroke="#1a74d6" stroke-width="1.5"/><rect x="109" y="11" width="17" height="14" rx="2"/><path d="M135 12L139 10H143L147 12L150 16L147 18V25H136V18L132 16Z"/><circle cx="166" cy="18" r="8"/><rect x="185" y="11" width="7" height="7" fill="#0f8f5c"/><rect x="193" y="11" width="7" height="7"/><rect x="185" y="19" width="7" height="7"/><rect x="193" y="19" width="7" height="7" fill="#0f8f5c"/><path d="M214 10L220 16V18L216 22V26H212V22L208 18V16Z"/></g>
<path d="M111 14.5H124M111 18H124" stroke="#fff" stroke-width="1.5" stroke-dasharray="2 1"/>
<circle cx="163" cy="17" r="2" fill="#fff"/><circle cx="169" cy="17" r="2" fill="#fff"/>
<path d="M153 24C148 14 168 4 196 0C176 7 158 13 157 21Z" fill="#8fb8e6" opacity=".9"/><path d="M155 24C158 31 174 30 180 20C178 32 162 36 155 24Z" fill="#3f86d8" opacity=".85"/><path d="M160 40C170 38 176 34 178 30C180 38 170 42 160 40Z" fill="#c9da6d"/>
<text x="38" y="24" fill="#1a74d6" font-size="17" font-weight="bold" font-family="Noto Sans CJK SC,sans-serif">英</text>
</svg>
<div class="a" style="left:1478px;top:982px;z-index:8;font:bold 21px/28px 'Noto Sans CJK SC',sans-serif;color:rgba(74,124,196,.85);white-space:nowrap">极光下载站</div>
<div class="a" style="left:1482px;top:1010px;z-index:8;font:17px/22px 'Liberation Sans',sans-serif;color:rgba(60,185,110,.85);white-space:nowrap">www.xz7.com</div>
</body></html>
